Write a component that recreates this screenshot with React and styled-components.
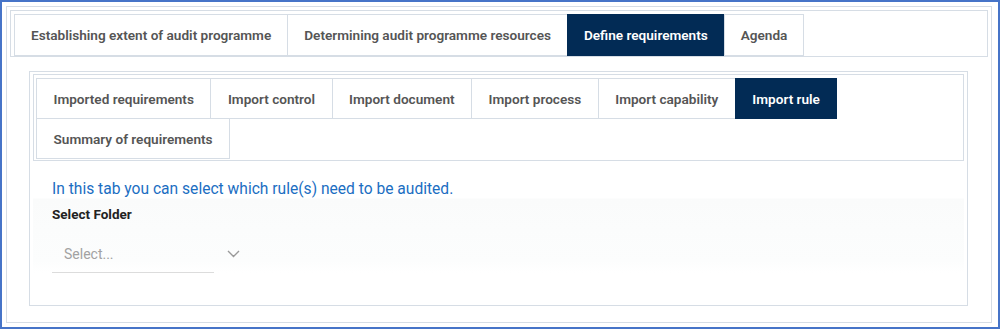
import React from 'react';
import styled, { createGlobalStyle } from 'styled-components';

const Global = createGlobalStyle`
  html, body { margin: 0; padding: 0; background: #fff; }
  body { font-family: Roboto, "Liberation Sans", Arial, sans-serif; }
  * { box-sizing: border-box; }
`;

const Frame = styled.div`
  width: 1000px;
  height: 329px;
  border: 2px solid #4674c8;
  padding: 4px 6px 4px 4px;
  background: #fff;
`;

const Card = styled.div`
  height: 100%;
  border: 1px solid #d6dde5;
  padding: 3px;
  display: flex;
  flex-direction: column;
`;

const TabBar = styled.div`
  display: flex;
  flex-wrap: wrap;
  border: 1px solid #d6dde5;
  padding: ${p => p.$sub ? '3px 2px 1px 2px' : '3px 3px 0 3px'};
`;

const Tab = styled.div`
  height: ${p => p.$sub ? '41px' : '42px'};
  padding: 0 ${p => p.$sub ? '16.5px' : '16px'};
  display: flex;
  align-items: center;
  border: 1px solid #d6dde5;
  margin-left: -1px;
  margin-top: ${p => p.$row2 ? '-1px' : '0'};
  font-size: 13.6px;
  font-weight: 600;
  white-space: nowrap;
  background: ${p => p.$active ? '#022b55' : '#fff'};
  color: ${p => p.$active ? '#fff' : '#555'};
  border-color: ${p => p.$active ? '#022b55' : '#d6dde5'};
  &:first-child { margin-left: 0; }
`;

const Body = styled.div`
  flex: 1;
  display: flex;
  padding: 14px 20px 13px 19px;
`;

const InnerCard = styled.div`
  flex: 1;
  border: 1px solid #d6dde5;
  padding: 2px 3px 0 3px;
  display: flex;
  flex-direction: column;
`;

const Content = styled.div`
  flex: 1;
  padding: 18px 22px 0 19px;
  background: linear-gradient(to bottom, #fff 0px, #fff 37px, #fafbfb 38px, #fcfdfd 100px, #fff 112px);
`;

const Description = styled.div`
  font-size: 15.6px;
  line-height: 20px;
  color: #1b6ec2;
`;

const Label = styled.div`
  margin-top: 6px;
  font-size: 13.5px;
  line-height: 18px;
  font-weight: 700;
  color: #222;
`;

const SelectRow = styled.div`
  margin-top: 12px;
  display: flex;
  align-items: center;
`;

const SelectInput = styled.div`
  width: 162px;
  height: 38px;
  border-bottom: 1px solid #dcdcdc;
  padding-left: 12px;
  display: flex;
  align-items: center;
  font-size: 14px;
  color: #a2a2a2;
`;

const Chevron = styled.svg`
  margin-left: 13px;
  margin-top: -1px;
  width: 13px;
  height: 8px;
`;

const topTabs = [
  'Establishing extent of audit programme',
  'Determining audit programme resources',
  'Define requirements',
  'Agenda',
];

const subTabs = [
  'Imported requirements',
  'Import control',
  'Import document',
  'Import process',
  'Import capability',
  'Import rule',
];

export default function App() {
  return (
    <>
      <Global />
      <Frame>
        <Card>
          <TabBar>
            {topTabs.map(t => (
              <Tab key={t} $active={t === 'Define requirements'}>{t}</Tab>
            ))}
          </TabBar>
          <Body>
            <InnerCard>
              <TabBar $sub>
                {subTabs.map(t => (
                  <Tab key={t} $sub $active={t === 'Import rule'}>{t}</Tab>
                ))}
                <Tab $sub $row2 style={{ marginLeft: 0 }}>Summary of requirements</Tab>
              </TabBar>
              <Content>
                <Description>In this tab you can select which rule(s) need to be audited.</Description>
                <Label>Select Folder</Label>
                <SelectRow>
                  <SelectInput>Select...</SelectInput>
                  <Chevron viewBox="0 0 13 8">
                    <path d="M1 1 L6.5 6.5 L12 1" fill="none" stroke="#9a9a9a" strokeWidth="1.4" />
                  </Chevron>
                </SelectRow>
              </Content>
            </InnerCard>
          </Body>
        </Card>
      </Frame>
    </>
  );
}
